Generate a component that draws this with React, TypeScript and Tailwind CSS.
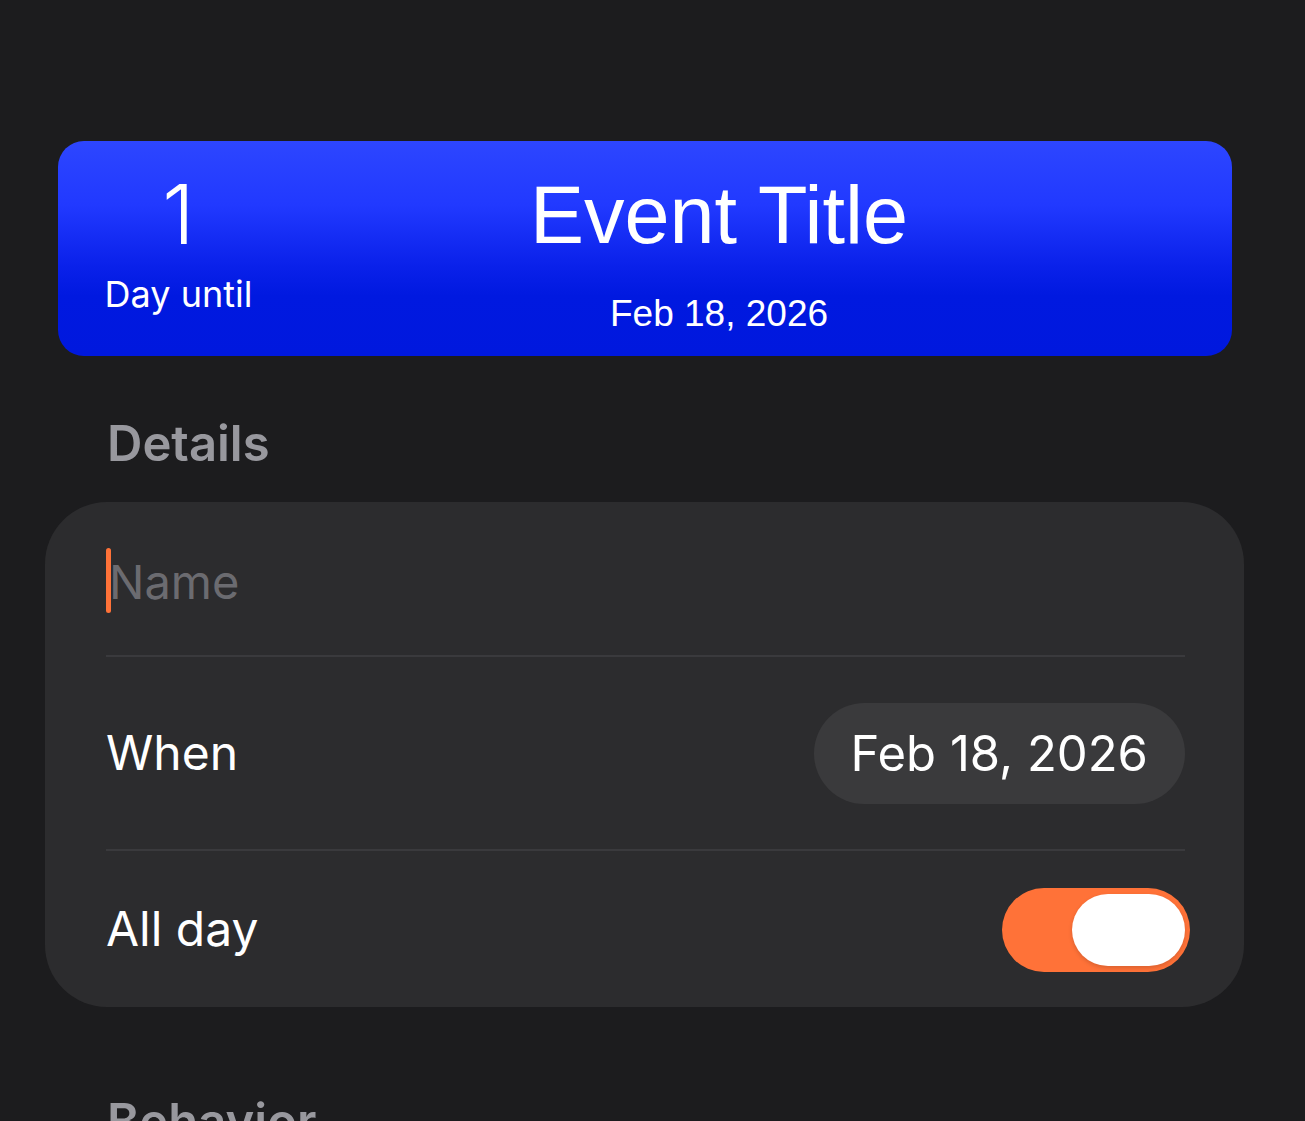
import { useState } from 'react';

const sans = { fontFamily: 'Inter, "Noto Sans", sans-serif' };
const helv = { fontFamily: '"Liberation Sans", Arial, sans-serif' };

function EventBanner() {
  return (
    <div className="ml-[58px] w-[1174px] h-[215px] rounded-[26px] bg-[linear-gradient(180deg,#2d46ff_0%,#2139ff_30%,#0a21ea_58%,#0019e0_72%,#0018de_100%)] flex pl-[49px] pr-[44px] pt-[33px]">
      <div className="w-[143px] flex flex-col items-center text-white" style={sans}>
        <div className="text-[82px] leading-none font-light">1</div>
        <div className="mt-[20px] text-[36px] leading-none whitespace-nowrap">Day until</div>
      </div>
      <div className="flex-1 flex flex-col items-center text-white" style={helv}>
        <div className="mt-[1px] text-[81px] leading-none">Event Title</div>
        <div className="mt-[39px] text-[37px] leading-none">Feb 18, 2026</div>
      </div>
    </div>
  );
}

function Toggle({ on, onChange }: { on: boolean; onChange: (v: boolean) => void }) {
  return (
    <button
      onClick={() => onChange(!on)}
      className={`relative block w-[188px] h-[84px] rounded-full ${on ? 'bg-[#ff7238]' : 'bg-[#3a3a3c]'}`}
    >
      <span
        className={`absolute top-[6px] h-[72px] w-[113px] rounded-full bg-white shadow-[0_2px_4px_rgba(0,0,0,0.15)] ${on ? 'right-[5px]' : 'left-[5px]'}`}
      />
    </button>
  );
}

export default function App() {
  const [allDay, setAllDay] = useState(true);

  return (
    <div className="min-h-[1121px] bg-[#1c1c1e] pt-[141px] overflow-hidden" style={sans}>
      <EventBanner />

      <h2 className="ml-[107px] mt-[63px] text-[49px] leading-none font-semibold text-[#98989e]">Details</h2>

      <div className="ml-[45px] mt-[34px] w-[1199px] rounded-[62px] bg-[#2c2c2e] pl-[61px] pr-[59px]">
        {/* name field */}
        <div className="h-[155px] flex items-center border-b-2 border-[#3a3a3d]">
          <span className="w-[5px] h-[65px] rounded-full bg-[#ff7238] -mr-[2px] mt-[3px]" />
          <span className="mt-[5px] text-[47px] leading-none text-[#6b6b70]">Name</span>
        </div>

        {/* date row */}
        <div className="h-[194px] flex items-center justify-between border-b-2 border-[#3a3a3d]">
          <span className="text-[48px] leading-none text-white">When</span>
          <button className="h-[101px] px-[37px] rounded-full bg-[#3a3a3c] text-[49px] leading-none text-white">
            Feb 18, 2026
          </button>
        </div>

        {/* all day row */}
        <div className="h-[156px] flex items-center justify-between">
          <span className="text-[48px] leading-none text-white">All day</span>
          <div className="flex -mr-[5px] mt-[2px]">
            <Toggle on={allDay} onChange={setAllDay} />
          </div>
        </div>
      </div>

      <h2 className="ml-[107px] mt-[90px] text-[49px] leading-none font-semibold text-[#98989e]">Behavior</h2>
    </div>
  );
}
